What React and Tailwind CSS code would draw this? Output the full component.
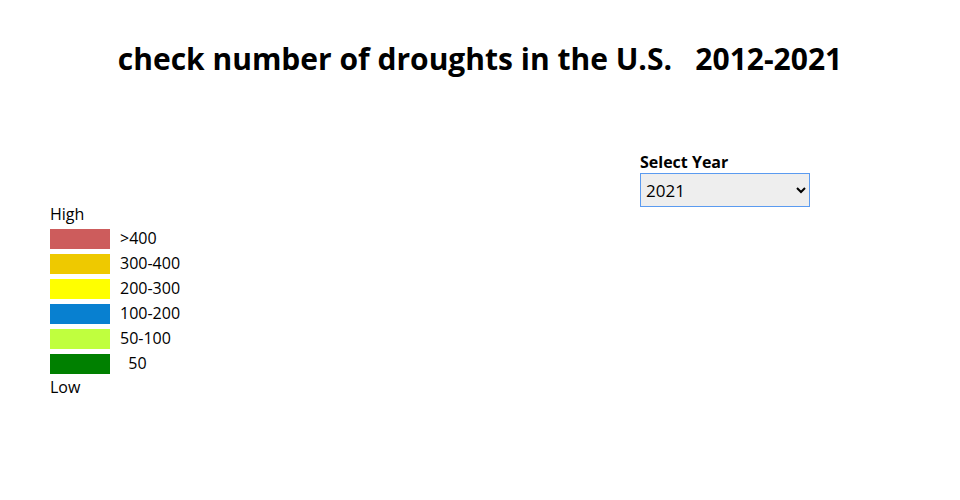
export default function App() {
  const legend = [
    { color: 'bg-[#cd5c5c]', label: '>400' },
    { color: 'bg-[#eec900]', label: '300-400' },
    { color: 'bg-[#ffff00]', label: '200-300' },
    { color: 'bg-[#0880d0]', label: '100-200' },
    { color: 'bg-[#c0ff3e]', label: '50-100' },
    { color: 'bg-[#008000]', label: '\u00a0\u00a050' },
  ];

  return (
    <div className="w-[960px] h-[500px] bg-white text-black font-['Open_Sans',sans-serif]">
      <h1 className="pt-[39px] text-center text-[30px] font-bold leading-[40px] whitespace-pre">
        {'check number of droughts in the U.S.   2012-2021'}
      </h1>

      <div className="mt-[73px] ml-[640px] flex flex-col">
        <label className="text-[16px] font-bold leading-[20px]">Select Year</label>
        <select
          defaultValue="2021"
          className="mt-[1px] w-[170px] h-[34px] border border-[#5b9bf0] bg-[#eeeeee] pl-[1px] pr-[5px] text-[17px] outline-none"
        >
          {[2021, 2020, 2019, 2018, 2017, 2016, 2015, 2014, 2013, 2012].map((y) => (
            <option key={y} value={y}>{y}</option>
          ))}
        </select>
      </div>

      <div className="ml-[50px] text-[16px] leading-[20px]">
        <div className="-mt-[3px] mb-[5px]">High</div>
        <div className="flex flex-col gap-[5px]">
          {legend.map((item) => (
            <div key={item.label} className="flex items-center gap-[10px]">
              <div className={`w-[60px] h-[20px] ${item.color}`} />
              <span className="whitespace-pre -mt-[2px]">{item.label}</span>
            </div>
          ))}
        </div>
        <div className="mt-[3px]">Low</div>
      </div>
    </div>
  );
}
